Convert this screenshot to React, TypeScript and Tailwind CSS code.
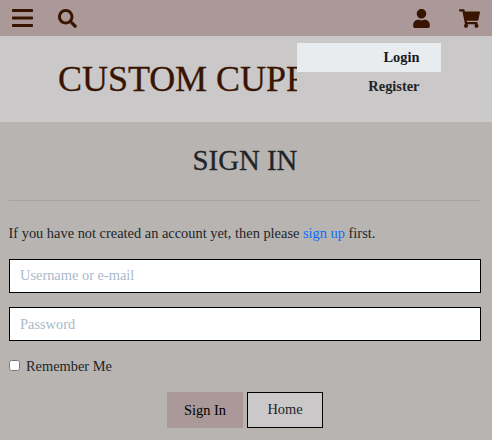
import { FaSearch, FaUser, FaShoppingCart } from "react-icons/fa";

function MenuIcon() {
  return (
    <svg className="ml-3 h-[18px] w-[21px]" viewBox="0 0 21 18" fill="currentColor">
      <rect width="21" height="3" rx=".7" />
      <rect y="7.5" width="21" height="3" rx=".7" />
      <rect y="15" width="21" height="3" rx=".7" />
    </svg>
  );
}

export default function App() {
  return (
    <div className="h-[440px] w-[492px] overflow-hidden bg-[#b8b4b1] font-['Liberation_Serif',serif] text-[14.4px] leading-[22px] text-[#212529]">
      <nav className="flex h-9 items-center bg-[#ab9999] text-[#391400]">
        <MenuIcon />
        <FaSearch className="ml-[25px] size-[19px]" />
        <FaUser className="ml-auto size-[19px]" />
        <FaShoppingCart className="mr-3 ml-[28px] size-[21px]" />
      </nav>
      <header className="flex h-[86px] items-start bg-[#cac8c9] pl-[58px]">
        <h1 className="w-[239px] overflow-hidden pt-[22px] text-[36px] leading-[43px] tracking-[-0.05px] whitespace-nowrap text-[#391400] [-webkit-text-stroke:0.3px]">CUSTOM CUPF</h1>
        <div className="mt-[7px] h-[58px] w-[144px] bg-[#cac8c9] text-right font-bold">
          <a className="block h-[29px] bg-[#e9ecef] pr-[21.5px] leading-[29px] text-[#16181b]">Login</a>
          <a className="block h-[29px] pr-[21.5px] leading-[29px]">Register</a>
        </div>
      </header>
      <main className="pt-[21px] pr-[11px] pl-[9px]">
        <h2 className="text-center text-[28.8px] leading-[35px] [-webkit-text-stroke:0.3px]">SIGN IN</h2>
        <hr className="mt-[22px] border-[#a5a2a0]" />
        <p className="mt-[21px] -ml-[0.5px]">If you have not created an account yet, then please <a className="text-[#0a6cff]">sign up</a> first.</p>
        <input className="mt-[15px] block h-[34px] w-full border border-black bg-white px-[10px] pb-px placeholder:text-[#a9bacb]" placeholder="Username or e-mail" />
        <input className="mt-[14px] block h-[34px] w-full border border-black bg-white px-[10px] placeholder:text-[#a9bacb]" placeholder="Password" />
        <label className="mt-[14px] flex items-center"><input type="checkbox" className="relative -top-px mr-[6px] size-[11px]" />Remember Me</label>
        <div className="mt-[15px] flex justify-center gap-1 text-black">
          <button className="h-9 w-[76px] bg-[#ab9999] pb-px">Sign In</button>
          <button className="h-9 w-[76px] border border-black bg-[#cac8c9] pb-[3px] text-[#212529]">Home</button>
        </div>
      </main>
    </div>
  );
}
